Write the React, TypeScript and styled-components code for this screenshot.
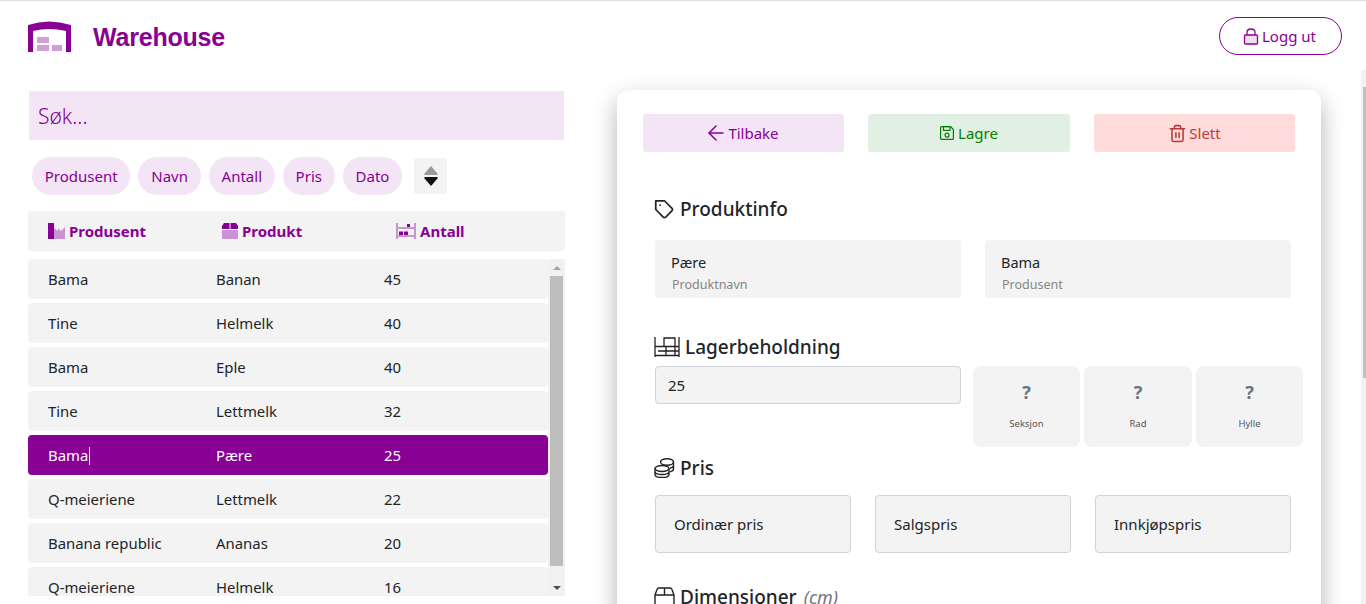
import React from "react";
import styled, { createGlobalStyle } from "styled-components";
import { FiArrowLeft, FiTag, FiTrash2 } from "react-icons/fi";

const PURPLE = "#880094";
const PALE = "#f3e5f5";
const GREY = "#f3f3f3";
const INK = "#212529";
const UI_FONT = '"Noto Sans", "Open Sans", sans-serif';

const GlobalStyle = createGlobalStyle`
  html, body {
    margin: 0;
    height: 100%;
    overflow: hidden;
    background: white;
    font-family: ${UI_FONT};
    color: ${INK};
  }
  * { box-sizing: border-box; }
`;

const Page = styled.div`
  height: 604px;
  display: flex;
  flex-direction: column;
  border-top: 1px solid #dedede;
`;

const Header = styled.header`
  flex: none;
  height: 69px;
  display: flex;
  align-items: center;
  justify-content: space-between;
  padding: 1px 24px 0 28px;
`;

const Brand = styled.div`
  display: flex;
  align-items: center;
  gap: 22px;
`;

const BrandName = styled.h1`
  margin: 0;
  padding-top: 2px;
  font: bold 25px "Liberation Sans", Arial, sans-serif;
  letter-spacing: -0.2px;
  color: ${PURPLE};
`;

const LogoutButton = styled.button`
  width: 123px;
  height: 38px;
  display: flex;
  align-items: center;
  justify-content: center;
  gap: 3px;
  padding-right: 8px;
  background: white;
  border: 1px solid ${PURPLE};
  border-radius: 19px;
  color: ${PURPLE};
  font: 15px ${UI_FONT};
`;

const Body = styled.main`
  flex: 1;
  min-height: 0;
  display: grid;
  grid-template-columns: 537px 704px;
  column-gap: 52px;
  padding: 20px 0 0 28px;
  overflow: hidden;
  position: relative;
`;

const LeftColumn = styled.section`
  min-width: 0;
  padding-top: 1px;
  display: flex;
  flex-direction: column;
`;

const SearchBox = styled.div`
  height: 49px;
  margin-left: 1px;
  width: 535px;
  display: flex;
  align-items: center;
  padding-left: 9px;
  background: ${PALE};
  border-radius: 2px;
  color: ${PURPLE};
  font-size: 21px;
  font-weight: 300;
`;

const SortRow = styled.div`
  display: flex;
  align-items: center;
  gap: 8px;
  margin: 17px 0 16px 4px;
`;

const Chip = styled.button`
  height: 38px;
  padding: 0 12.8px;
  background: ${PALE};
  border: none;
  border-radius: 19px;
  color: ${PURPLE};
  font: 15px ${UI_FONT};
`;

const SortToggle = styled.button`
  width: 33px;
  height: 36px;
  margin-left: 4px;
  padding: 0;
  display: flex;
  align-items: center;
  justify-content: center;
  background: ${GREY};
  border: none;
  border-radius: 3px;
`;

const TableHead = styled.div`
  height: 40px;
  display: grid;
  grid-template-columns: 174px 174px 1fr;
  align-items: center;
  padding-left: 20px;
  background: ${GREY};
  border-radius: 3px;
`;

const HeadCell = styled.div`
  display: flex;
  align-items: center;
  gap: 4px;
  color: ${PURPLE};
  font-size: 15px;
  font-weight: 700;
`;

const ListFrame = styled.div`
  height: 337px;
  margin-top: 8px;
  display: flex;
`;

const RowList = styled.div`
  flex: 1;
  min-width: 0;
  overflow: hidden;
  display: flex;
  flex-direction: column;
  gap: 4px;
`;

const ListTrack = styled.div`
  flex: none;
  width: 17px;
  display: flex;
  flex-direction: column;
  align-items: center;
  background: #f1f1f1;
`;

const TrackArrow = styled.div<{ $down?: boolean }>`
  flex: none;
  height: 17px;
  display: flex;
  align-items: center;
  justify-content: center;

  &::before {
    content: "";
    border-left: 4px solid transparent;
    border-right: 4px solid transparent;
    ${(p) =>
      p.$down
        ? "border-top: 4px solid #505050;"
        : "border-bottom: 4px solid #a3a3a3;"}
  }
`;

const TrackThumb = styled.div`
  flex: none;
  width: 13px;
  height: 290px;
  background: #bdbdbd;
`;

const TrackSpacer = styled.div`
  flex: 1;
`;

const Row = styled.div<{ $selected?: boolean }>`
  flex: none;
  height: 40px;
  display: grid;
  grid-template-columns: 168px 168px 1fr;
  align-items: center;
  padding-left: 20px;
  background: ${(p) => (p.$selected ? PURPLE : GREY)};
  color: ${(p) => (p.$selected ? "white" : INK)};
  border-radius: 4px;
  font-size: 14.9px;
`;

const Caret = styled.span`
  display: inline-block;
  width: 1px;
  height: 18px;
  margin-left: 1px;
  background: white;
  vertical-align: -4px;
`;

const Card = styled.section`
  height: 640px;
  padding: 24px 26px 0;
  background: white;
  border-radius: 12px;
  box-shadow: 0 10px 25px rgba(0, 0, 0, 0.3);
`;

const ActionBar = styled.div`
  display: grid;
  grid-template-columns: 201px 202px 201px;
  column-gap: 24px;
`;

const ActionButton = styled.button<{ $bg: string; $fg: string }>`
  height: 38px;
  display: flex;
  align-items: center;
  justify-content: center;
  background: ${(p) => p.$bg};
  color: ${(p) => p.$fg};
  border: none;
  border-radius: 3px;
  font: 15px ${UI_FONT};
`;

const BackArrow = styled(FiArrowLeft)`
  margin-left: -4px;
  stroke-width: 1.5;
`;

const TrashIcon = styled(FiTrash2)`
  margin-right: 2px;
`;

const SectionTitle = styled.h2<{ $top: number }>`
  margin: ${(p) => p.$top}px 0 0 11px;
  display: flex;
  align-items: center;
  gap: 5px;
  height: 28px;
  font-size: 19px;
  font-weight: 500;
  color: ${INK};
`;

const Unit = styled.em`
  margin-left: 2px;
  font-size: 18px;
  font-weight: 400;
  color: #6c757d;
`;

const InfoGrid = styled.div`
  display: grid;
  grid-template-columns: 306px 306px;
  column-gap: 24px;
  margin: 17px 0 0 12px;
`;

const InfoTile = styled.div`
  height: 58px;
  padding: 12px 16px 0;
  background: ${GREY};
  border-radius: 4px;
  font-size: 14.5px;
  line-height: 20px;
`;

const InfoLabel = styled.div`
  font-size: 12.5px;
  line-height: 18px;
  margin-top: 4px;
  padding-left: 1px;
  color: #868686;
`;

const StockGrid = styled.div`
  display: grid;
  grid-template-columns: 314px 107px 108px 107px;
  column-gap: 4px;
  margin: 5px 0 0 12px;
`;

const StockInput = styled.div`
  height: 38px;
  width: 306px;
  padding-left: 12px;
  display: flex;
  align-items: center;
  background: ${GREY};
  border: 1px solid #ced4da;
  border-radius: 4px;
  font-size: 15px;
`;

const SlotTile = styled.div`
  height: 81px;
  display: flex;
  flex-direction: column;
  align-items: center;
  padding-top: 13px;
  background: ${GREY};
  border-radius: 8px;
  color: #6c757d;
`;

const SlotMark = styled.span`
  font-size: 18px;
  font-weight: 700;
  line-height: 26px;
`;

const SlotName = styled.span`
  margin-top: 12px;
  font-size: 9.5px;
  line-height: 14px;
  color: #555;
`;

const PriceGrid = styled.div`
  display: grid;
  grid-template-columns: repeat(3, 196px);
  column-gap: 24px;
  margin: 13px 0 0 12px;
`;

const PriceTile = styled.div`
  height: 58px;
  display: flex;
  align-items: center;
  padding-left: 18px;
  background: ${GREY};
  border: 1px solid #ced4da;
  border-radius: 4px;
  font-size: 15px;
`;

const PageScrollbar = styled.div`
  position: absolute;
  top: 0;
  right: 0;
  width: 5px;
  height: 100%;
  padding: 17px 0 0 2px;
  background: #f1f1f1;
`;

const PageScrollThumb = styled.div`
  height: 291px;
  background: #c1c1c1;
`;

const SaveSvg = styled.svg`
  margin-right: 4px;
`;

const LogoIcon = () => (
  <svg width="43" height="31" viewBox="0 0 43 31">
    <path fill={PURPLE} d="M0 4Q21 -3 43 4V31H38V10Q21 6 5 10V31H0Z" />
    <path fill="#d09fd8" d="M9 16H21V22H9ZM9 24H21V30H9ZM24 24H34V30H24Z" />
  </svg>
);

const LockIcon = () => (
  <svg width="16" height="17" viewBox="0 0 16 17">
    <rect x="1.500" y="7" width="13" height="9" rx="1" fill="#ece0ef" stroke={PURPLE} strokeWidth="1.300" />
    <path d="M4 7V4.500C4 2.300 5.800 1 8 1S12 2.300 12 4.500V7" fill="none" stroke={PURPLE} strokeWidth="1.300" />
  </svg>
);

const SaveIcon = () => (
  <SaveSvg width="14" height="14" viewBox="0 0 14 14" fill="none" stroke="#008000" strokeWidth="1.200">
    <path d="M.6 1.600Q.6 .6 1.600 .6H10.500L13.400 3.500V12.400Q13.400 13.400 12.400 13.400H1.600Q.6 13.400 .6 12.400Z" />
    <rect x="3.500" y=".6" width="6.500" height="3.800" />
    <circle cx="7" cy="9.200" r="2" />
  </SaveSvg>
);

const FactoryIcon = () => (
  <svg width="17" height="16" viewBox="0 0 17 16">
    <rect fill={PURPLE} x="0" y="0" width="6" height="16" />
    <path fill="#c994d2" d="M6 5L10 8V5L13 8L17 4V16H6Z" />
  </svg>
);

const BoxIcon = () => (
  <svg width="16" height="16" viewBox="0 0 16 16">
    <path fill={PURPLE} d="M2 0H7.500V6H0V3ZM8.500 0H14L16 3V6H8.500Z" />
    <path fill="#c994d2" d="M0 7H16V15Q16 16 15 16H1Q0 16 0 15Z" />
  </svg>
);

const ShelfIcon = () => (
  <svg width="20" height="16" viewBox="0 0 20 16">
    <path fill="#c994d2" d="M0 0H2V4H18V0H20V16H18V14H2V16H0ZM2 6V12H18V6Z" />
    <path fill={PURPLE} d="M3 8.500H7V12H3ZM8 8.500H12V12H8ZM11 1H14V4H11Z" />
  </svg>
);

const SortIcon = () => (
  <svg width="14" height="20" viewBox="0 0 14 20">
    <path fill="#999" d="M7 0L13.500 7.500V9H.5V7.500Z" />
    <path fill="#111" d="M.5 11H13.500V12.500L7 20L.5 12.500Z" />
  </svg>
);

const WarehouseLineIcon = () => (
  <svg width="26" height="20" viewBox="0 0 26 20" fill="none" stroke="#222" strokeWidth="1.300">
    <path d="M1 0V20M25 0V20M1 18.500H25M1 9.500H25M10 9.500V1H21V9.500M4 14H25M12 9.500V18.500M21 9.500V18.500" />
  </svg>
);

const CoinsIcon = () => (
  <svg width="21" height="20" viewBox="0 0 21 20" fill="none" stroke="#222" strokeWidth="1.400">
    <ellipse cx="13" cy="4" rx="6.500" ry="3.200" />
    <path d="M19.500 4V11C19.500 12.300 18 13.300 16 13.700M6.500 7.500V8M19.500 7.500C19.500 8.800 18 9.800 16 10.200" />
    <ellipse cx="8" cy="10.500" rx="7" ry="3" />
    <path d="M1 10.500V16.500C1 18.200 4 19.500 8 19.500S15 18.200 15 16.500V10.500M1 13.500C1 15.200 4 16.500 8 16.500S15 15.200 15 13.500" />
  </svg>
);

const CrateIcon = () => (
  <svg width="21" height="20" viewBox="0 0 21 20" fill="none" stroke="#222" strokeWidth="1.400">
    <path d="M1 8L3 2.500Q3.500 1 5 1H16Q17.500 1 18 2.500L20 8V18Q20 19 19 19H2Q1 19 1 18ZM1 8H20M10.500 1V8" />
  </svg>
);

const ROWS = [
  ["Bama", "Banan", "45"],
  ["Tine", "Helmelk", "40"],
  ["Bama", "Eple", "40"],
  ["Tine", "Lettmelk", "32"],
  ["Bama", "Pære", "25"],
  ["Q-meieriene", "Lettmelk", "22"],
  ["Banana republic", "Ananas", "20"],
  ["Q-meieriene", "Helmelk", "16"],
];

const App = () => (
  <Page>
    <GlobalStyle />
    <Header>
      <Brand>
        <LogoIcon />
        <BrandName>Warehouse</BrandName>
      </Brand>
      <LogoutButton>
        <LockIcon /> Logg ut
      </LogoutButton>
    </Header>

    <Body>
      <LeftColumn>
        <SearchBox>Søk...</SearchBox>
        <SortRow>
          {["Produsent", "Navn", "Antall", "Pris", "Dato"].map((label) => (
            <Chip key={label}>{label}</Chip>
          ))}
          <SortToggle>
            <SortIcon />
          </SortToggle>
        </SortRow>
        <TableHead>
          <HeadCell>
            <FactoryIcon /> Produsent
          </HeadCell>
          <HeadCell>
            <BoxIcon /> Produkt
          </HeadCell>
          <HeadCell>
            <ShelfIcon /> Antall
          </HeadCell>
        </TableHead>
        <ListFrame>
          <RowList>
            {ROWS.map(([maker, product, count], i) => (
              <Row key={i} $selected={i === 4}>
                <span>
                  {maker}
                  {i === 4 && <Caret />}
                </span>
                <span>{product}</span>
                <span>{count}</span>
              </Row>
            ))}
          </RowList>
          <ListTrack>
            <TrackArrow />
            <TrackThumb />
            <TrackSpacer />
            <TrackArrow $down />
          </ListTrack>
        </ListFrame>
      </LeftColumn>

      <Card>
        <ActionBar>
          <ActionButton $bg={PALE} $fg={PURPLE}>
            <BackArrow size={24} /> Tilbake
          </ActionButton>
          <ActionButton $bg="#e1f0e2" $fg="#008000">
            <SaveIcon /> Lagre
          </ActionButton>
          <ActionButton $bg="#ffdbdb" $fg="#bb3a3a">
            <TrashIcon size={19} /> Slett
          </ActionButton>
        </ActionBar>

        <SectionTitle $top={43}>
          <FiTag size={21} /> Produktinfo
        </SectionTitle>
        <InfoGrid>
          <InfoTile>
            Pære
            <InfoLabel>Produktnavn</InfoLabel>
          </InfoTile>
          <InfoTile>
            Bama
            <InfoLabel>Produsent</InfoLabel>
          </InfoTile>
        </InfoGrid>

        <SectionTitle $top={35}>
          <WarehouseLineIcon /> Lagerbeholdning
        </SectionTitle>
        <StockGrid>
          <StockInput>25</StockInput>
          {["Seksjon", "Rad", "Hylle"].map((slot) => (
            <SlotTile key={slot}>
              <SlotMark>?</SlotMark>
              <SlotName>{slot}</SlotName>
            </SlotTile>
          ))}
        </StockGrid>

        <SectionTitle $top={7}>
          <CoinsIcon /> Pris
        </SectionTitle>
        <PriceGrid>
          {["Ordinær pris", "Salgspris", "Innkjøpspris"].map((price) => (
            <PriceTile key={price}>{price}</PriceTile>
          ))}
        </PriceGrid>

        <SectionTitle $top={30}>
          <CrateIcon /> Dimensjoner <Unit>(cm)</Unit>
        </SectionTitle>
      </Card>

      <PageScrollbar>
        <PageScrollThumb />
      </PageScrollbar>
    </Body>
  </Page>
);

export default App;
